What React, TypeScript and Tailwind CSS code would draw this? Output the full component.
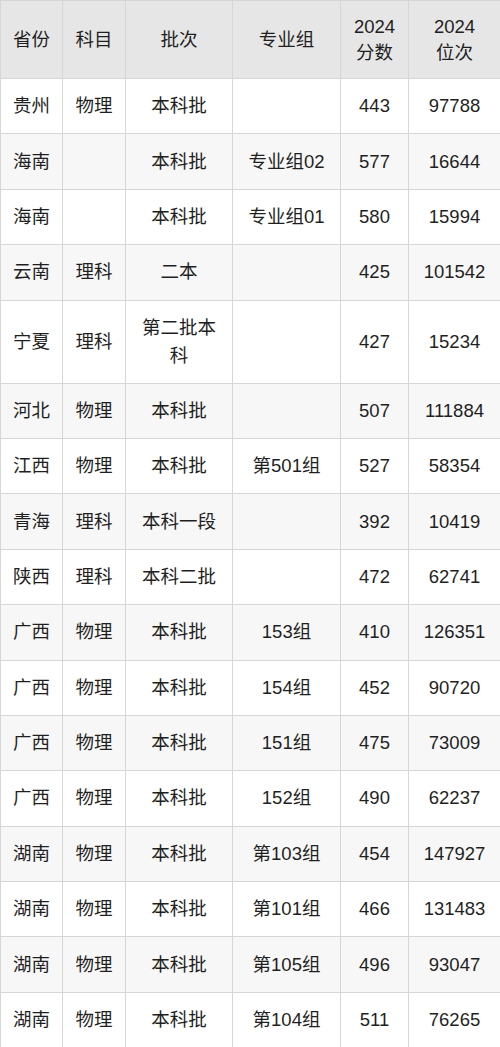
const rows: string[][] = [
  ['贵州', '物理', '本科批', '', '443', '97788'],
  ['海南', '', '本科批', '专业组02', '577', '16644'],
  ['海南', '', '本科批', '专业组01', '580', '15994'],
  ['云南', '理科', '二本', '', '425', '101542'],
  ['宁夏', '理科', '第二批本科', '', '427', '15234'],
  ['河北', '物理', '本科批', '', '507', '111884'],
  ['江西', '物理', '本科批', '第501组', '527', '58354'],
  ['青海', '理科', '本科一段', '', '392', '10419'],
  ['陕西', '理科', '本科二批', '', '472', '62741'],
  ['广西', '物理', '本科批', '153组', '410', '126351'],
  ['广西', '物理', '本科批', '154组', '452', '90720'],
  ['广西', '物理', '本科批', '151组', '475', '73009'],
  ['广西', '物理', '本科批', '152组', '490', '62237'],
  ['湖南', '物理', '本科批', '第103组', '454', '147927'],
  ['湖南', '物理', '本科批', '第101组', '466', '131483'],
  ['湖南', '物理', '本科批', '第105组', '496', '93047'],
  ['湖南', '物理', '本科批', '第104组', '511', '76265'],
]

const widths = ['w-[62px]', 'w-[63px]', 'w-[107px]', 'w-[108px]', 'w-[68px]', 'w-[92px]']

export default function App() {
  return (
    <div className="w-[500px] bg-white font-['Liberation_Sans','Noto_Sans_CJK_SC',sans-serif] text-[18.5px] text-[#1f1f1f]">
      <table className="w-[500px] table-fixed border-collapse">
        <thead>
          <tr className="h-[78px] bg-[#e6e6e6]">
            {['省份', '科目', '批次', '专业组', '2024\n分数', '2024\n位次'].map((h, i) => (
              <th
                key={i}
                className={`${widths[i]} border border-[#d6d6d6] px-1 text-center font-normal leading-[26px] whitespace-pre-line`}
              >
                {h}
              </th>
            ))}
          </tr>
        </thead>
        <tbody>
          {rows.map((r, ri) => (
            <tr
              key={ri}
              className={`${ri === 4 ? 'h-[83px]' : 'h-[55.4px]'} ${ri % 2 === 1 ? 'bg-[#f7f7f7]' : 'bg-white'}`}
            >
              {r.map((c, ci) => (
                <td
                  key={ci}
                  className="border border-[#d6d6d6] px-3 text-center leading-[28px]"
                >
                  {c}
                </td>
              ))}
            </tr>
          ))}
        </tbody>
      </table>
    </div>
  )
}
